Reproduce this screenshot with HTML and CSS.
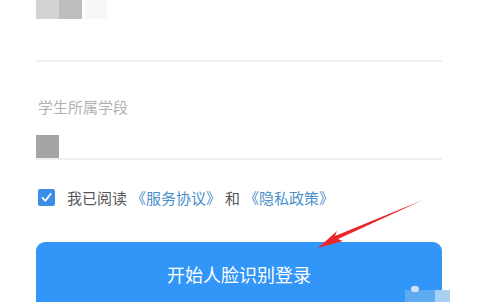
FILE: index.html
```html
<!DOCTYPE html>
<html lang="zh">
<head>
<meta charset="utf-8">
<link rel="stylesheet" href="styles.css">
</head>
<body>
<div class="page">
  <div class="top-row">
    <span class="blk blk-a"></span><span class="blk blk-b"></span><span class="blk blk-c"></span>
  </div>
  <div class="line line1"></div>
  <div class="label">学生所属学段</div>
  <div class="value-row"><span class="blk blk-d"></span></div>
  <div class="line line2"></div>
  <div class="agree">
    <span class="check"><svg viewBox="0 0 17 17" width="17" height="17"><path d="M4.5 8.8 L7.4 11.8 L12.6 5" fill="none" stroke="#fff" stroke-width="1.8" stroke-linecap="round" stroke-linejoin="round"/></svg></span>
    <span class="agree-text">我已阅读</span>
    <span class="link">《服务协议》</span>
    <span class="agree-text">和</span>
    <span class="link">《隐私政策》</span>
  </div>
  <div class="btn">开始人脸识别登录</div>
</div>
<svg class="arrow" viewBox="0 0 497 302" width="497" height="302">
  <path d="M423 200 L335 236 L337 231 L318 248 L343 241 L338 239 Z" fill="#e8262b"/>
</svg>
<div class="wm"><span class="wm1"></span><span class="wm2"></span><span class="wm3"></span></div>
</body>
</html>
```
FILE: styles.css
```css
html, body { margin: 0; padding: 0; background: #fff; }
body { width: 497px; height: 302px; overflow: hidden; position: relative; font-family: "Noto Sans CJK SC", "Noto Sans", sans-serif; }
.page { padding-left: 36px; width: 406px; }
.top-row { display: flex; height: 19px; }
.blk { display: block; }
.blk-a { width: 23px; height: 19px; background: #d3d3d3; }
.blk-b { width: 23px; height: 19px; background: #bebebe; }
.blk-c { width: 22px; height: 19px; background: #f7f7f7; margin-left: 3px; }
.line { height: 2px; background: #efefef; }
.line1 { margin-top: 41px; }
.label { margin-top: 35px; font-size: 15px; line-height: 20px; color: #b2b2b2; padding-left: 2px; }
.value-row { margin-top: 18px; height: 23px; display: flex; }
.blk-d { width: 23px; height: 23px; background: #a5a5a5; }
.line2 { margin-top: 0; background: #f0f0f0; }
.agree { margin-top: 29px; display: flex; align-items: center; height: 17px; padding-left: 2px; font-size: 15px; line-height: 17px; }
.check { width: 17px; height: 17px; background: #3a8ee8; border-radius: 2px; display: block; margin-right: 12px; }
.check svg { display: block; }
.agree-text { color: #555; margin-right: 4px; }
.link { color: #4a8fcb; margin-right: 4px; }
.btn { margin-top: 36px; height: 72px; border-radius: 9px; background: #3196f7; color: #fff; font-size: 18px; line-height: 64px; text-align: center; letter-spacing: 0; }
.arrow { position: absolute; left: 0; top: 0; }
.wm { position: absolute; left: 0; top: 0; }
.wm1 { position: absolute; left: 405px; top: 290px; width: 44px; height: 12px; background: #7fb9ef; opacity: .6; }
.wm2 { position: absolute; left: 411px; top: 286px; width: 8px; height: 6px; background: #cfe4f8; border-radius: 3px; }
.wm3 { position: absolute; left: 435px; top: 290px; width: 15px; height: 12px; background: #a9d0f4; }
```
